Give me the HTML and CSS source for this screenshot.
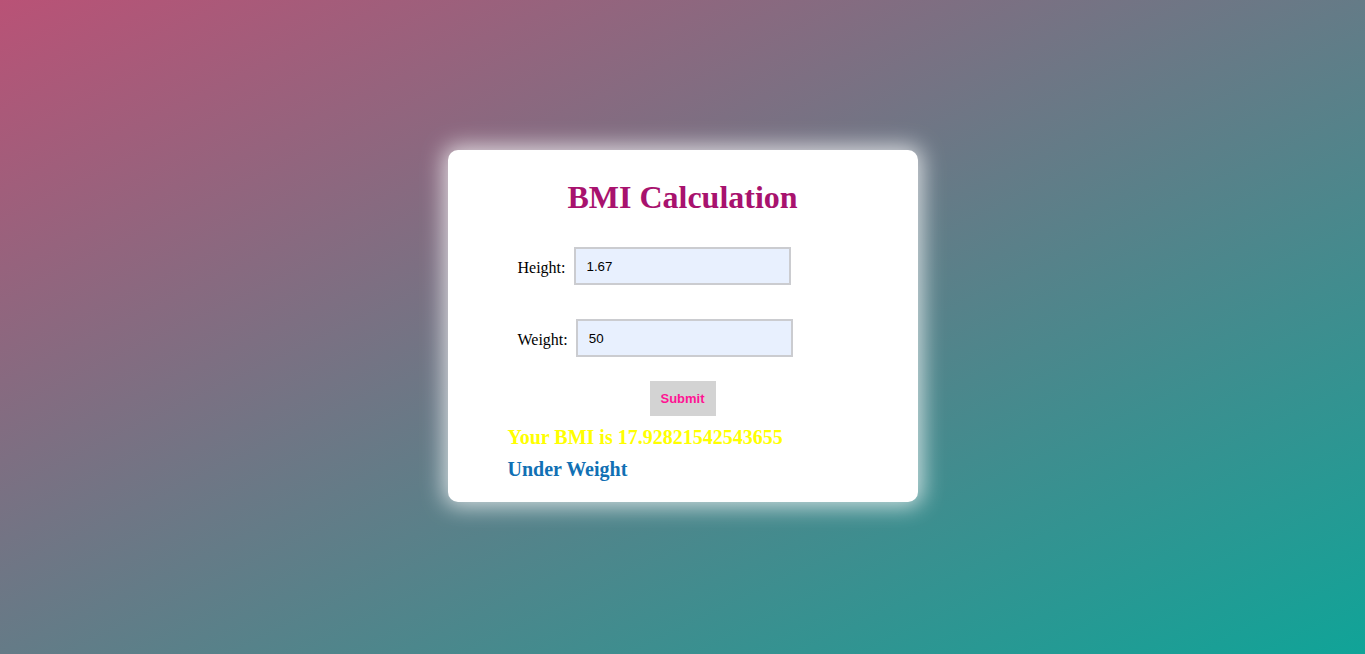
FILE: index.html
```html
<!DOCTYPE html>
<html>
<head>
<meta charset="utf-8">
<title>BMI Calculation</title>
<link rel="stylesheet" href="styles.css">
</head>
<body>
<main class="page">
  <section class="card">
    <h1 class="title">BMI Calculation</h1>
    <form class="form">
      <div class="row">
        <label class="label" for="h">Height:</label>
        <input class="field" id="h" type="text" value="1.67">
      </div>
      <div class="row">
        <label class="label" for="w">Weight:</label>
        <input class="field" id="w" type="text" value="50">
      </div>
      <div class="actions">
        <button class="submit" type="button">Submit</button>
      </div>
    </form>
    <h3 class="result bmi">Your BMI is 17.92821542543655</h3>
    <h3 class="result status">Under Weight</h3>
  </section>
</main>
</body>
</html>
```

FILE: styles.css
```css
html, body {
  margin: 0;
  height: 100%;
}
body {
  font-family: "Liberation Serif", "Times New Roman", serif;
  background: linear-gradient(to bottom right, #b95276, #10a498);
}
.page {
  height: 654px;
  display: flex;
  justify-content: center;
  padding-top: 150px;
  box-sizing: border-box;
}
.card {
  width: 470px;
  height: 352px;
  box-sizing: border-box;
  background: #fff;
  border-radius: 10px;
  box-shadow: 0 0 22px 4px rgba(255, 255, 255, 0.75);
  padding: 29px 0 0 60px;
}
.title {
  margin: 0 60px 0 0;
  font-size: 32px;
  line-height: 37px;
  text-align: center;
  color: #a8126e;
  font-weight: bold;
}
.form {
  margin-top: 31px;
  padding-left: 10px;
}
.row {
  display: flex;
  align-items: flex-start;
  gap: 8px;
  height: 38px;
  margin-bottom: 34px;
}
.label {
  font-size: 16px;
  line-height: 18px;
  margin-top: 12px;
  color: #000;
}
.field {
  box-sizing: border-box;
  width: 217px;
  height: 38px;
  border: 2px solid #cbccd0;
  background: #e8f0fe;
  padding: 0 11px;
  font-family: "Liberation Sans", Arial, sans-serif;
  font-size: 13.33px;
  color: #000;
  outline: none;
}
.actions {
  display: flex;
  justify-content: center;
  margin: -10px 0 0 -70px;
}
.submit {
  width: 66px;
  height: 35px;
  border: none;
  background: #d3d3d3;
  color: #ff1493;
  font-family: "Liberation Sans", Arial, sans-serif;
  font-size: 13px;
  font-weight: bold;
  padding: 0;
}
.result {
  margin: 0;
  font-size: 20px;
  line-height: 23px;
  font-weight: bold;
}
.bmi {
  color: #ffff00;
  margin-top: 10px;
}
.status {
  color: #1170b4;
  margin-top: 9px;
}
```
